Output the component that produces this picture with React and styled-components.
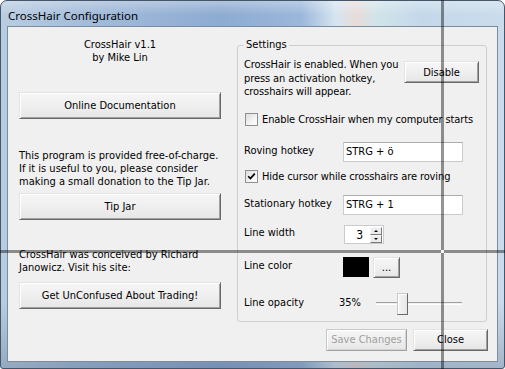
import styled, { createGlobalStyle } from "styled-components";

const GlobalStyle = createGlobalStyle`
    html, body {
        margin: 0;
        padding: 0;
        background: #ffffff;
    }
    body {
        width: 505px;
        height: 369px;
        overflow: hidden;
    }
`;

function Checkbox({ checked }) {
    return (
        <Box>
            {checked && (
                <svg width="9" height="9" viewBox="0 0 9 9">
                    <path d="M1.2 4.2 L3.4 6.6 L7.8 1.6" stroke="#000" strokeWidth="1.7" fill="none" />
                </svg>
            )}
        </Box>
    );
}

export default function App() {
    return (
        <Screen>
            <GlobalStyle />
            <Window>
                <TitleBar>
                    <Title>CrossHair Configuration</Title>
                </TitleBar>
                <Frame>
                    <Client>
                        <LeftColumn>
                            <About>CrossHair v1.1<br />by Mike Lin</About>
                            <Button $mt={28}>Online Documentation</Button>
                            <Text $mt={30}>
                                This program is provided free-of-charge.<br />
                                If it is useful to you, please consider<br />
                                making a small donation to the Tip Jar.
                            </Text>
                            <Button $mt={5}>Tip Jar</Button>
                            <Text $mt={28}>
                                CrossHair was conceived by Richard<br />
                                Janowicz. Visit his site:
                            </Text>
                            <Button $mt={8}>Get UnConfused About Trading!</Button>
                        </LeftColumn>
                        <RightColumn>
                            <Group>
                                <Legend>Settings</Legend>
                                <IntroRow>
                                    <Intro>
                                        CrossHair is enabled. When you<br />
                                        press an activation hotkey,<br />
                                        crosshairs will appear.
                                    </Intro>
                                    <Button $w={75} $h={22} $mt={3}>Disable</Button>
                                </IntroRow>
                                <CheckRow $mt={14}>
                                    <Checkbox />
                                    <span>Enable CrossHair when my computer starts</span>
                                </CheckRow>
                                <Row $mt={16}>
                                    <Label>Roving hotkey</Label>
                                    <Field>STRG + ö</Field>
                                </Row>
                                <CheckRow $mt={8}>
                                    <Checkbox checked />
                                    <span>Hide cursor while crosshairs are roving</span>
                                </CheckRow>
                                <Row $mt={12}>
                                    <Label>Stationary hotkey</Label>
                                    <Field>STRG + 1</Field>
                                </Row>
                                <Row $mt={10}>
                                    <Label>Line width</Label>
                                    <Spinner>
                                        <SpinValue>3</SpinValue>
                                        <SpinButtons>
                                            <SpinButton><Arrow $up /></SpinButton>
                                            <SpinButton><Arrow /></SpinButton>
                                        </SpinButtons>
                                    </Spinner>
                                </Row>
                                <Row $mt={13}>
                                    <Label>Line color</Label>
                                    <Swatch />
                                    <Button $w={27} $h={21} $ml={4}>...</Button>
                                </Row>
                                <Row $mt={15}>
                                    <Label $w={95}>Line opacity</Label>
                                    <Percent>35%</Percent>
                                    <Slider>
                                        <Track />
                                        <Thumb style={{ left: `${35 * 0.6}px` }} />
                                    </Slider>
                                </Row>
                            </Group>
                            <ButtonRow>
                                <Button $w={81} $h={22} disabled>Save Changes</Button>
                                <Button $w={75} $h={22}>Close</Button>
                            </ButtonRow>
                        </RightColumn>
                    </Client>
                </Frame>
            </Window>
            <VLine />
            <HLine />
            <Dot />
        </Screen>
    );
}

const Screen = styled.div`
    position: relative;
    width: 505px;
    height: 369px;
    font-family: "DejaVu Sans Condensed", "DejaVu Sans", sans-serif;
    font-size: 11px;
    color: #000;
`;
const Window = styled.div`
    box-sizing: border-box;
    width: 505px;
    height: 369px;
    border: 1px solid #465567;
    border-radius: 7px 7px 3px 3px;
    display: flex;
    flex-direction: column;
    background:
        linear-gradient(180deg, rgba(255,255,255,0.3) 0px, rgba(255,255,255,0) 14px, rgba(0,0,0,0) 300px, rgba(40,60,90,0.25) 369px),
        linear-gradient(90deg, #b9cde2 0px, #a2bbd9 90px, #8eabd2 220px, #9bb7da 300px, #d6e5f0 335px, #e8dcda 355px, #d0e4ea 375px, #c4d8ea 420px, #cadcec 505px);
    overflow: hidden;
`;
const TitleBar = styled.div`
    height: 25px;
    display: flex;
    align-items: center;
    padding-left: 7px;
`;
const Title = styled.span`
    font-family: "Noto Sans", "Open Sans", sans-serif;
    font-size: 11.5px;
    color: #000;
    margin-top: 3px;
`;
const Frame = styled.div`
    flex: 1;
    padding: 0 6px 6px 6px;
    display: flex;
`;
const Client = styled.div`
    flex: 1;
    border: 1px solid #7d8c9d;
    background: #f0f0f0;
    display: flex;
    padding-left: 11px;
`;
const LeftColumn = styled.div`
    width: 202px;
    padding-top: 11px;
    display: flex;
    flex-direction: column;
`;
const About = styled.div`
    text-align: center;
    line-height: 13px;
`;
const Text = styled.div`
    margin-top: ${(p) => p.$mt || 0}px;
    line-height: 13px;
    white-space: nowrap;
`;
const Button = styled.button`
    box-sizing: border-box;
    width: ${(p) => (p.$w ? `${p.$w}px` : "100%")};
    height: ${(p) => p.$h || 27}px;
    margin-top: ${(p) => p.$mt || 0}px;
    margin-left: ${(p) => p.$ml || 0}px;
    flex-shrink: 0;
    padding: 0;
    font-family: inherit;
    font-size: 11px;
    color: #000;
    background: linear-gradient(180deg, #f6f6f6 0%, #efefef 50%, #e6e6e6 100%);
    border: 1px solid #e3e3e3;
    border-right-color: #696969;
    border-bottom-color: #696969;
    box-shadow: inset 1px 1px 0 #ffffff, inset -1px -1px 0 #a0a0a0;
    &:disabled {
        color: #a0a0a0;
        border-color: #c8c8c8;
        border-right-color: #a0a0a0;
        border-bottom-color: #a0a0a0;
        box-shadow: inset 1px 1px 0 #ffffff, inset -1px -1px 0 #d4d4d4;
    }
`;
const RightColumn = styled.div`
    width: 250px;
    margin-left: 16px;
    padding-top: 18px;
    display: flex;
    flex-direction: column;
`;
const Group = styled.div`
    position: relative;
    border: 1px solid #cfcfcf;
    border-radius: 3px;
    padding: 12px 7px 6px 6px;
    display: flex;
    flex-direction: column;
`;
const Legend = styled.span`
    position: absolute;
    top: -8px;
    left: 6px;
    padding: 0 2px;
    line-height: 13px;
    background: #f0f0f0;
`;
const IntroRow = styled.div`
    display: flex;
    justify-content: space-between;
    align-items: flex-start;
`;
const Intro = styled.div`
    line-height: 13.5px;
    white-space: nowrap;
    letter-spacing: -0.1px;
`;
const CheckRow = styled.div`
    display: flex;
    align-items: center;
    height: 13px;
    line-height: 13px;
    margin-top: ${(p) => p.$mt || 0}px;
    padding-left: 1px;
    gap: 4px;
    white-space: nowrap;
    letter-spacing: -0.1px;
`;
const Box = styled.div`
    box-sizing: border-box;
    width: 13px;
    height: 13px;
    border: 1px solid #8e8f8f;
    background: linear-gradient(135deg, #dcdcdc 0%, #f4f4f4 60%, #ffffff 100%);
    display: flex;
    align-items: center;
    justify-content: center;
`;
const Row = styled.div`
    display: flex;
    align-items: center;
    margin-top: ${(p) => p.$mt || 0}px;
`;
const Label = styled.div`
    width: ${(p) => p.$w || 99}px;
    flex-shrink: 0;
    line-height: 13px;
    margin-top: -3px;
    white-space: nowrap;
`;
const Field = styled.div`
    box-sizing: border-box;
    width: 120px;
    height: 20px;
    border: 1px solid #c9cbd0;
    border-top-color: #abadb3;
    background: #ffffff;
    padding-left: 2px;
    line-height: 18px;
`;
const Spinner = styled.div`
    display: flex;
    height: 19px;
    margin-left: 1px;
`;
const SpinValue = styled.div`
    box-sizing: border-box;
    width: 26px;
    height: 19px;
    border: 1px solid #c9cbd0;
    border-right: none;
    background: #ffffff;
    text-align: right;
    padding-right: 7px;
    line-height: 18px;
    font-size: 12px;
`;
const SpinButtons = styled.div`
    display: flex;
    flex-direction: column;
    border: 1px solid #c9cbd0;
    border-left: none;
    background: #ffffff;
    padding: 1px 1px 0 0;
`;
const SpinButton = styled.div`
    box-sizing: border-box;
    width: 12px;
    height: 8px;
    background: #ececec;
    border: 1px solid #f8f8f8;
    border-right-color: #7a7a7a;
    border-bottom-color: #7a7a7a;
    display: flex;
    align-items: center;
    justify-content: center;
`;
const Arrow = styled.div`
    width: 0;
    height: 0;
    border-left: 2px solid transparent;
    border-right: 2px solid transparent;
    ${(p) => (p.$up ? "border-bottom: 2px solid #000;" : "border-top: 2px solid #000;")}
`;
const Swatch = styled.div`
    width: 26px;
    height: 20px;
    background: #000;
`;
const Percent = styled.div`
    width: 37px;
    line-height: 13px;
    margin-top: -3px;
`;
const Slider = styled.div`
    position: relative;
    width: 86px;
    height: 22px;
`;
const Track = styled.div`
    position: absolute;
    left: 0;
    right: 0;
    top: 9px;
    height: 1px;
    border-top: 1px solid #a0a0a0;
    border-bottom: 1px solid #ffffff;
`;
const Thumb = styled.div`
    position: absolute;
    top: 0;
    box-sizing: border-box;
    width: 11px;
    height: 22px;
    background: linear-gradient(90deg, #f4f4f4, #e8e8e8);
    border: 1px solid #c8c8c8;
    border-right-color: #696969;
    border-bottom-color: #696969;
    box-shadow: inset 1px 1px 0 #ffffff;
`;
const ButtonRow = styled.div`
    display: flex;
    justify-content: flex-end;
    gap: 6px;
    margin-top: 7px;
    margin-right: -1px;
`;
const VLine = styled.div`
    position: absolute;
    left: 441px;
    top: 0;
    width: 3px;
    height: 369px;
    background: rgba(0, 0, 0, 0.42);
`;
const HLine = styled.div`
    position: absolute;
    top: 250px;
    left: 0;
    width: 505px;
    height: 3px;
    background: rgba(0, 0, 0, 0.42);
`;
const Dot = styled.div`
    position: absolute;
    left: 441px;
    top: 250px;
    width: 3px;
    height: 3px;
    background: #f4f4f4;
`;
